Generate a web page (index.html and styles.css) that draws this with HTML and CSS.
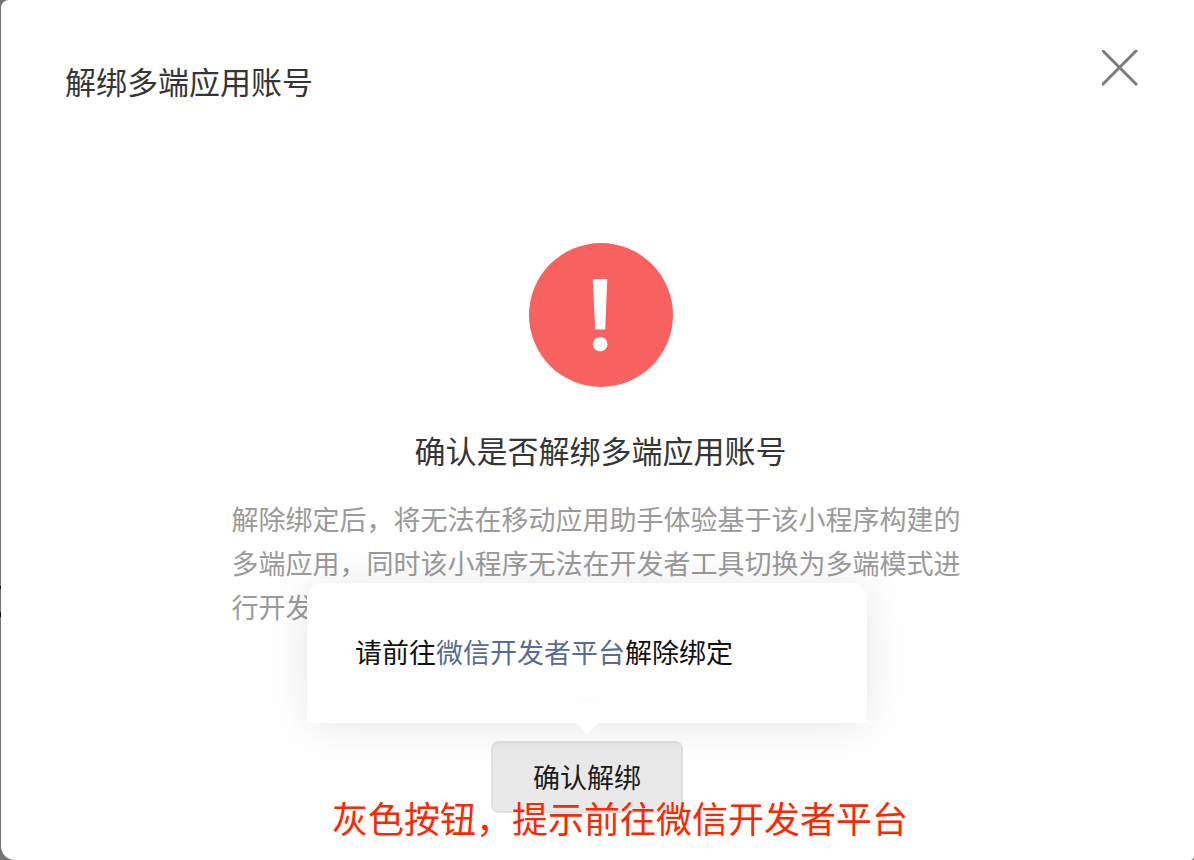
FILE: index.html
```html
<!DOCTYPE html>
<html lang="zh-CN">
  <head>
    <meta charset="UTF-8" />
    <title>解绑多端应用账号</title>
    <link rel="stylesheet" href="styles.css">
  </head>
  <body>
    <div class="dialog" role="dialog" aria-labelledby="dialog-title">
      <div class="dialog-header">
        <h1 id="dialog-title">解绑多端应用账号</h1>
        <button type="button" class="close-button">
          <svg width="36" height="36" viewBox="0 0 36 36">
            <path d="M0 0L35 35M35 0L0 35" fill="none" stroke="#7b7c7d" stroke-width="3" />
          </svg>
        </button>
      </div>

      <div class="dialog-body">
        <!-- 警告图标 -->
        <svg class="warn-icon" width="144" height="144" viewBox="0 0 144 144">
          <circle cx="72" cy="72" r="72" fill="#f76260" />
          <path d="M65 36h12q1.300 0 1.200 1.300L76.200 86.500h-10L63.900 37.300Q63.900 36 65 36z" fill="#fff" />
          <circle cx="71.200" cy="101.200" r="7.300" fill="#fff" />
        </svg>

        <h2>确认是否解绑多端应用账号</h2>
        <p class="desc">解除绑定后，将无法在移动应用助手体验基于该小程序构建的多端应用，同时该小程序无法在开发者工具切换为多端模式进行开发</p>

        <div class="action">
          <button type="button" class="confirm-button">确认解绑</button>
          <!-- 按钮上方的提示 -->
          <div class="popover">
            请前往<a href="#">微信开发者平台</a>解除绑定
          </div>
        </div>
      </div>

      <div class="note">灰色按钮，提示前往微信开发者平台</div>
    </div>
  </body>
</html>
```
FILE: styles.css
```css
* {
  box-sizing: border-box;
}

body {
  margin: 0;
  padding-left: 1px;
  font-family: "Liberation Sans", "Noto Sans CJK SC", sans-serif;
  background: linear-gradient(
    #747474 586px,
    #111 586px,
    #111 589px,
    #747474 589px,
    #747474 612px,
    #111 612px,
    #111 617px,
    #747474 617px
  );
}

h1,
h2,
p {
  margin: 0;
  font-weight: normal;
}

h1,
h2 {
  font-size: 31px;
  line-height: 44px;
  color: #353535;
}

button {
  font-family: inherit;
  cursor: pointer;
}

.dialog {
  position: relative;
  min-height: 100vh;
  background: #fff;
  border-radius: 8px 0 4px 14px;
}

.dialog-header {
  display: flex;
  justify-content: space-between;
  align-items: flex-start;
  padding: 50px 56px 0 64px;
}

.dialog-header h1 {
  padding-top: 12px;
}

.close-button {
  display: flex;
  padding: 0;
  background: none;
  border: none;
}

.dialog-body {
  display: flex;
  flex-direction: column;
  align-items: center;
  padding-top: 137px;
}

.warn-icon {
  margin-left: 7px;
}

h2 {
  margin-top: 44px;
  margin-left: 6px;
}

.desc {
  max-width: 738px;
  margin-top: 24px;
  margin-left: 6px;
  font-size: 27px;
  line-height: 44px;
  color: #9a9a9a;
}

.action {
  position: relative;
  margin-top: 110px;
  margin-right: 21px;
}

.confirm-button {
  display: block;
  width: 192px;
  height: 72px;
  padding: 0 0 2px;
  font-size: 27px;
  color: #1a1b1c;
  background: #e9e9e9;
  border: 2px solid #dfe1e0;
  border-radius: 8px;
}

/* 提示框 */
.popover {
  position: absolute;
  left: 50%;
  bottom: calc(100% + 18px);
  width: 560px;
  padding: 49px 48px 47px;
  margin-left: -280px;
  font-size: 27px;
  line-height: 44px;
  color: #111;
  background: #fff;
  border-radius: 16px 16px 0 0;
  box-shadow: 0 2px 44px rgba(0, 0, 0, 0.1);
}

.popover::before {
  content: "";
  position: absolute;
  left: 256px;
  bottom: 20px;
  width: 48px;
  height: 10px;
  background: radial-gradient(ellipse at bottom, #fcfcfc, #fff 70%);
}

/* 箭头 */
.popover::after {
  content: "";
  position: absolute;
  left: 50%;
  top: 100%;
  margin-left: -11px;
  border: 11px solid transparent;
  border-top-color: #fff;
  border-bottom: none;
}

.popover a {
  color: #576b95;
  text-decoration: none;
}

.note {
  position: absolute;
  left: 331px;
  bottom: 14px;
  font-size: 36px;
  line-height: 50px;
  color: #ff2600;
}
```
